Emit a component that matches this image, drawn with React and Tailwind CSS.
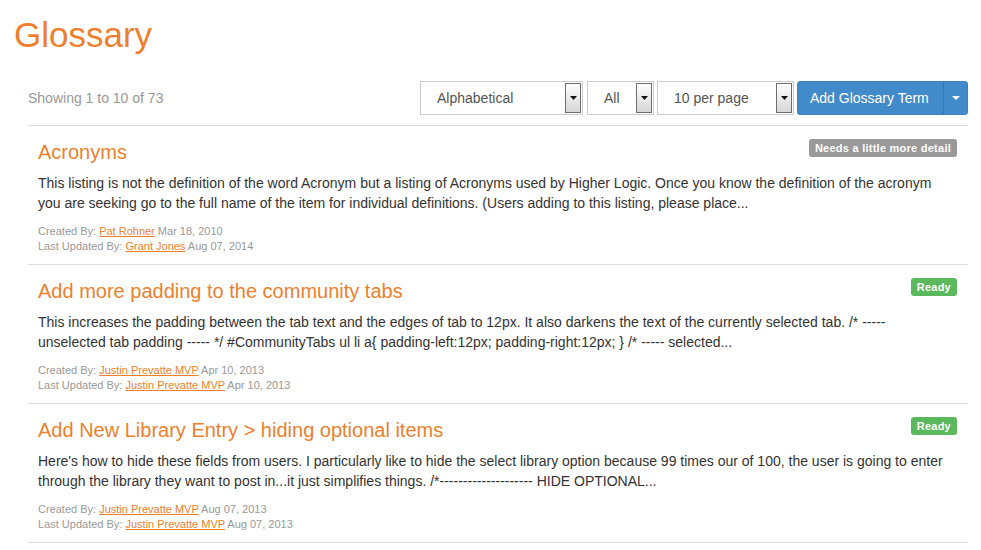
import React from 'react';

const terms = [
  {
    title: 'Acronyms',
    badge: 'Needs a little more detail',
    badgeColor: 'bg-[#999999]',
    text: 'This listing is not the definition of the word Acronym but a listing of Acronyms used by Higher Logic. Once you know the definition of the acronym you are seeking go to the full name of the item for individual definitions. (Users adding to this listing, please place...',
    createdBy: 'Pat Rohner',
    createdOn: 'Mar 18, 2010',
    updatedBy: 'Grant Jones',
    updatedOn: 'Aug 07, 2014',
  },
  {
    title: 'Add more padding to the community tabs',
    badge: 'Ready',
    badgeColor: 'bg-[#5cb85c]',
    text: 'This increases the padding between the tab text and the edges of tab to 12px. It also darkens the text of the currently selected tab. /* ----- unselected tab padding ----- */ #CommunityTabs ul li a{ padding-left:12px; padding-right:12px; } /* ----- selected...',
    createdBy: 'Justin Prevatte MVP',
    createdOn: 'Apr 10, 2013',
    updatedBy: 'Justin Prevatte MVP',
    updatedOn: 'Apr 10, 2013',
  },
  {
    title: 'Add New Library Entry > hiding optional items',
    badge: 'Ready',
    badgeColor: 'bg-[#5cb85c]',
    text: "Here's how to hide these fields from users. I particularly like to hide the select library option because 99 times our of 100, the user is going to enter through the library they want to post in...it just simplifies things. /*-------------------- HIDE OPTIONAL...",
    createdBy: 'Justin Prevatte MVP',
    createdOn: 'Aug 07, 2013',
    updatedBy: 'Justin Prevatte MVP',
    updatedOn: 'Aug 07, 2013',
  },
];

function SelectBox({ label, width, className = '' }) {
  return (
    <div className={`${width} ${className} h-[34px] border border-[#cccccc] bg-white flex items-center justify-between pl-[16px] pr-[1px]`}>
      <span className="text-[14px] text-[#555555]">{label}</span>
      <span className="w-[16px] h-[30px] border border-[#6d6d6d] bg-gradient-to-b from-white to-[#d6d6d6] flex items-center justify-center">
        <svg width="7" height="4" viewBox="0 0 7 4">
          <path d="M0 0h7L3.5 4z" fill="#111" />
        </svg>
      </span>
    </div>
  );
}

function TermItem({ term }) {
  return (
    <div className="border-b border-[#dddddd] pl-[10px] pr-[11px] pt-[12px] pb-[10px]">
      <div className="flex justify-between items-start">
        <h2 className="text-[20px] leading-[28px] text-[#ee7f2d]">{term.title}</h2>
        <span className={`${term.badgeColor} mt-[1px] rounded-[3px] px-[6px] h-[18px] flex items-center text-[11px] font-bold tracking-[0.25px] text-white`}>
          {term.badge}
        </span>
      </div>
      <p className="mt-[7px] pr-[5px] text-[14px] leading-[20px] text-[#333333]">{term.text}</p>
      <div className="mt-[11px] text-[11px] leading-[15px] text-[#999999]">
        <div>
          Created By: <a className="text-[#ee7f2d] underline">{term.createdBy}</a> {term.createdOn}
        </div>
        <div>
          Last Updated By: <a className="text-[#ee7f2d] underline">{term.updatedBy}</a> {term.updatedOn}
        </div>
      </div>
    </div>
  );
}

export default function App() {
  return (
    <div className="w-[981px] h-[550px] bg-white overflow-hidden font-['Liberation_Sans',Arial,sans-serif]">
      <h1 className="mt-[15px] ml-[14px] text-[35px] leading-[40px] text-[#ee7f2d]">Glossary</h1>

      <div className="ml-[28px] w-[940px]">
        <div className="mt-[26px] flex items-center justify-between border-b border-[#dddddd] pb-[10px]">
          <span className="text-[14px] text-[#999999]">Showing 1 to 10 of 73</span>
          <div className="flex items-center">
            <SelectBox label="Alphabetical" width="w-[163px]" />
            <SelectBox label="All" width="w-[67px]" className="ml-[4px]" />
            <SelectBox label="10 per page" width="w-[137px]" className="ml-[3px]" />
            <div className="ml-[3px] flex h-[34px] rounded-[3px] bg-[#428bca] border border-[#3a81c0] text-white">
              <span className="w-[146px] flex items-center pl-[12px] text-[14px] border-r border-[#3676b0]">Add Glossary Term</span>
              <span className="flex items-center justify-center w-[23px]">
                <svg width="8" height="4" viewBox="0 0 8 4">
                  <path d="M0 0h8L4 4z" fill="#fff" />
                </svg>
              </span>
            </div>
          </div>
        </div>

        {terms.map((t) => (
          <TermItem key={t.title} term={t} />
        ))}
      </div>
    </div>
  );
}
